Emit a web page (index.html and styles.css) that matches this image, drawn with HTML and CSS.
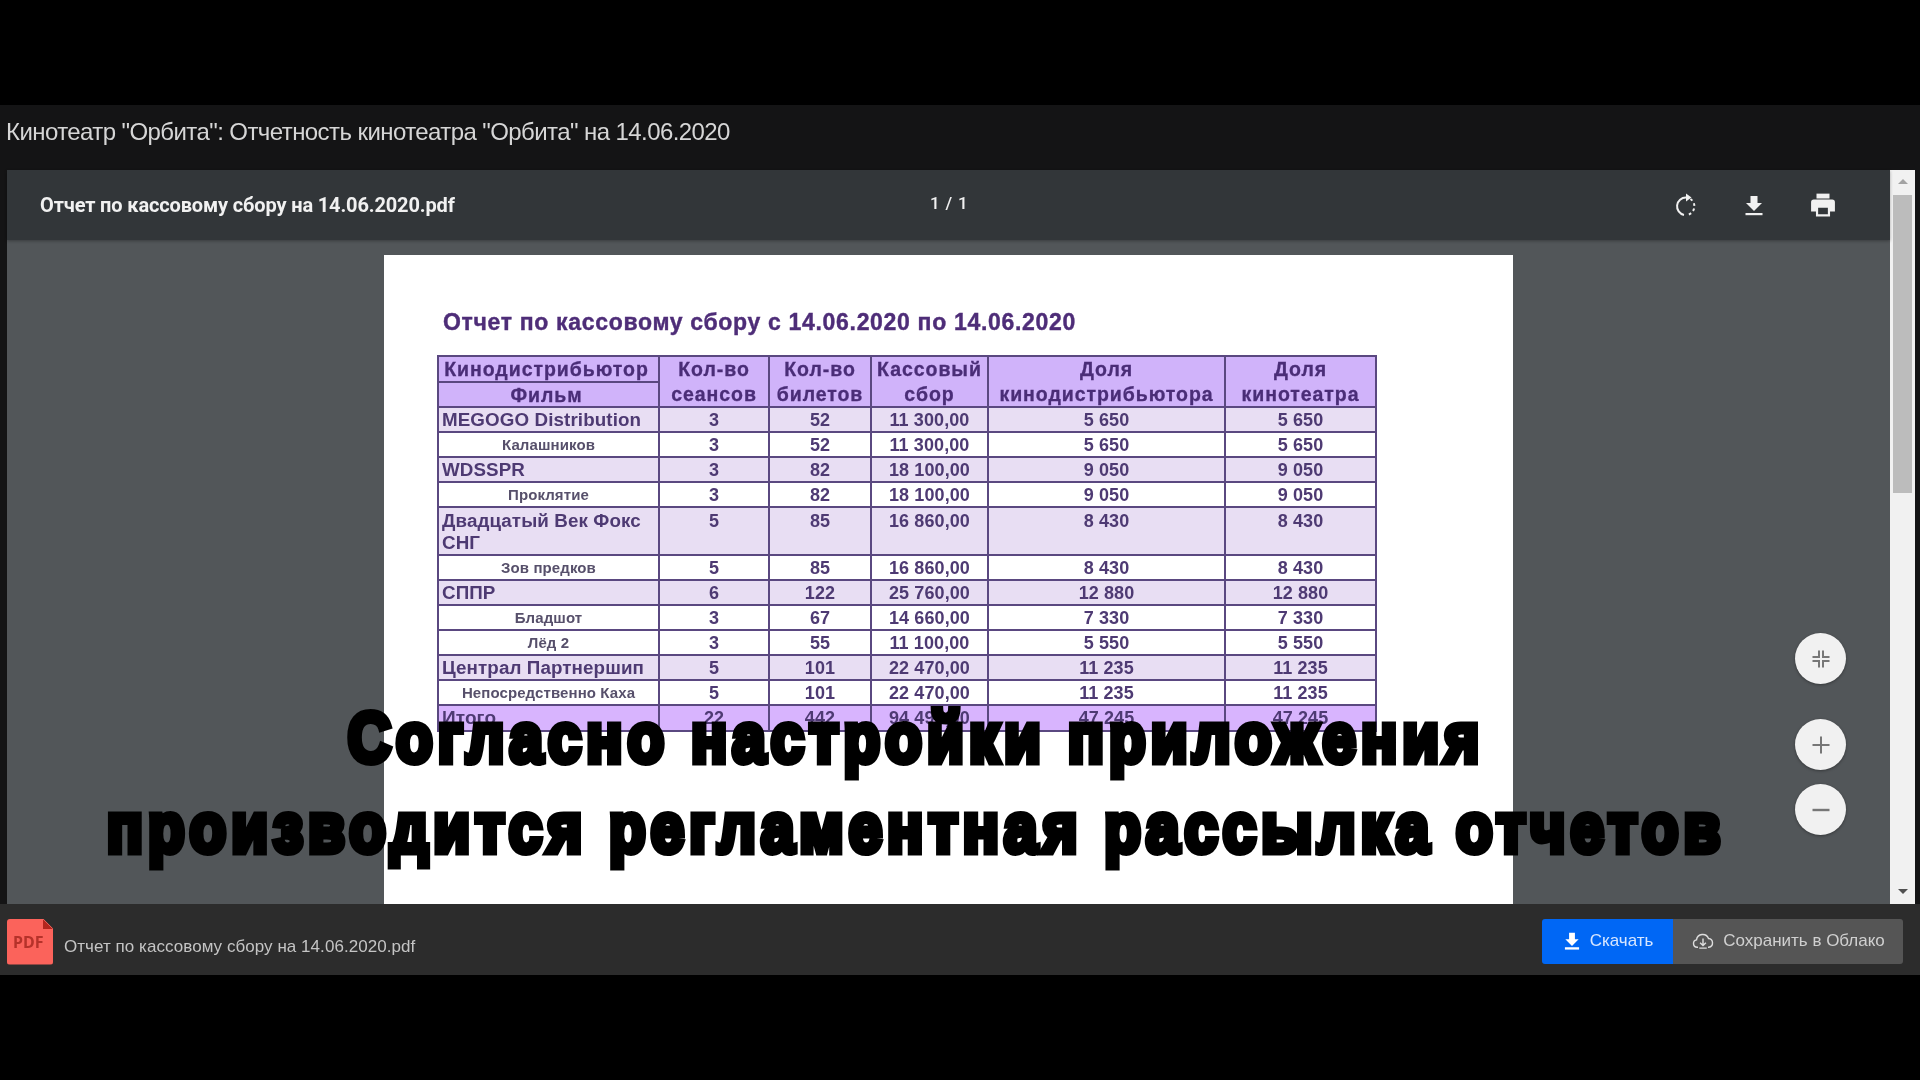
FILE: index.html
```html
<!DOCTYPE html>
<html lang="ru">
<head>
    <meta charset="UTF-8">
    <title>Отчетность кинотеатра "Орбита"</title>
    <link rel="stylesheet" href="styles.css">
</head>
<body>
    <div class="screen">
        <div class="title-bar">Кинотеатр "Орбита": Отчетность кинотеатра "Орбита" на 14.06.2020</div>

        <div class="viewer-row">
            <div class="viewer">
                <div class="toolbar">
                    <div class="doc-name">Отчет по кассовому сбору на 14.06.2020.pdf</div>
                    <div class="page-count">1 / 1</div>
                    <div class="tools">
                        <svg class="tool" viewBox="0 0 24 24"><path d="M12 4.500a8.800 8.800 0 0 0-2 17.400" fill="none" stroke="#f1f1f1" stroke-width="2"/><path d="M12 .5l5.500 4-5.500 4z" fill="#f1f1f1"/><path d="M16.500 6a8.800 8.800 0 0 1-3.500 16" fill="none" stroke="#f1f1f1" stroke-width="2" stroke-dasharray="2.600 2.800"/></svg>
                        <svg class="tool" viewBox="0 0 24 24"><path d="M8.500 3h7v7H20l-8 8-8-8h4.500z" fill="#f1f1f1"/><rect x="3.500" y="20" width="17" height="2.200" fill="#f1f1f1"/></svg>
                        <svg class="tool print" viewBox="0 0 24 24"><path d="M6 1.500h12v4.500H6z" fill="#f1f1f1"/><path fill-rule="evenodd" d="M3.500 7h17A2.500 2.500 0 0 1 23 9.500V18h-4.500v4.500h-13V18H1V9.500A2.500 2.500 0 0 1 3.500 7zM7.500 14.500v6h9v-6z" fill="#f1f1f1"/></svg>
                    </div>
                </div>

                <div class="canvas">
                    <div class="page">
                        <h1 class="report-title">Отчет по кассовому сбору с 14.06.2020 по 14.06.2020</h1>
                        <table class="report">
                            <colgroup>
                                <col class="c-name"><col class="c-sess"><col class="c-tick"><col class="c-sum"><col class="c-dist"><col class="c-cin">
                            </colgroup>
                            <thead>
                                <tr class="h1">
                                    <th class="th-name">Кинодистрибьютор</th>
                                    <th rowspan="2">Кол-во<br>сеансов</th>
                                    <th rowspan="2">Кол-во<br>билетов</th>
                                    <th rowspan="2">Кассовый<br>сбор</th>
                                    <th rowspan="2">Доля<br>кинодистрибьютора</th>
                                    <th rowspan="2">Доля<br>кинотеатра</th>
                                </tr>
                                <tr class="h2"><th class="th-name">Фильм</th></tr>
                            </thead>
                            <tbody>
                                <tr class="dist"><td>MEGOGO Distribution</td><td>3</td><td>52</td><td>11 300,00</td><td>5 650</td><td>5 650</td></tr>
                                <tr class="film"><td>Калашников</td><td>3</td><td>52</td><td>11 300,00</td><td>5 650</td><td>5 650</td></tr>
                                <tr class="dist"><td>WDSSPR</td><td>3</td><td>82</td><td>18 100,00</td><td>9 050</td><td>9 050</td></tr>
                                <tr class="film"><td>Проклятие</td><td>3</td><td>82</td><td>18 100,00</td><td>9 050</td><td>9 050</td></tr>
                                <tr class="dist tall"><td>Двадцатый Век Фокс СНГ</td><td>5</td><td>85</td><td>16 860,00</td><td>8 430</td><td>8 430</td></tr>
                                <tr class="film"><td>Зов предков</td><td>5</td><td>85</td><td>16 860,00</td><td>8 430</td><td>8 430</td></tr>
                                <tr class="dist"><td>СППР</td><td>6</td><td>122</td><td>25 760,00</td><td>12 880</td><td>12 880</td></tr>
                                <tr class="film"><td>Бладшот</td><td>3</td><td>67</td><td>14 660,00</td><td>7 330</td><td>7 330</td></tr>
                                <tr class="film"><td>Лёд 2</td><td>3</td><td>55</td><td>11 100,00</td><td>5 550</td><td>5 550</td></tr>
                                <tr class="dist"><td>Централ Партнершип</td><td>5</td><td>101</td><td>22 470,00</td><td>11 235</td><td>11 235</td></tr>
                                <tr class="film"><td>Непосредственно Каха</td><td>5</td><td>101</td><td>22 470,00</td><td>11 235</td><td>11 235</td></tr>
                                <tr class="total"><td>Итого</td><td>22</td><td>442</td><td>94 490,00</td><td>47 245</td><td>47 245</td></tr>
                            </tbody>
                        </table>
                    </div>

                    <div class="fab fab-fit">
                        <svg viewBox="0 0 24 24"><path d="M10 3.500V10H3.500M14 3.500V10h6.500M10 20.500V14H3.500M14 20.500V14h6.500" fill="none" stroke="#777" stroke-width="2"/></svg>
                    </div>
                    <div class="fab fab-plus">
                        <svg viewBox="0 0 24 24"><path d="M12 3.500v17M3.500 12h17" fill="none" stroke="#777" stroke-width="2"/></svg>
                    </div>
                    <div class="fab fab-minus">
                        <svg viewBox="0 0 24 24"><path d="M3.500 12h17" fill="none" stroke="#777" stroke-width="2.400"/></svg>
                    </div>
                </div>
            </div>

            <div class="scrollbar">
                <div class="arrow-up"></div>
                <div class="thumb"></div>
                <div class="arrow-down"></div>
            </div>
        </div>

        <div class="bottom-bar">
            <div class="file-icon">PDF</div>
            <div class="file-name">Отчет по кассовому сбору на 14.06.2020.pdf</div>
            <div class="actions">
                <button class="btn btn-blue">
                    <svg viewBox="0 0 24 24"><path d="M8.500 2h7v8H20l-8 8-8-8h4.500z" fill="#fff"/><rect x="3.500" y="19.500" width="17" height="2.800" fill="#fff"/></svg>
                    Скачать
                </button>
                <button class="btn btn-grey">
                    <svg viewBox="0 0 26 24"><path d="M7 19.500H6a4.500 4.500 0 0 1-.8-8.900A7.500 7.500 0 0 1 19.600 9a5.300 5.300 0 0 1 .4 10.500h-1" fill="none" stroke="#ddd" stroke-width="1.700"/><path d="M13 9v8M9.500 14l3.500 3.500 3.500-3.500M8.500 20.500h9" fill="none" stroke="#ddd" stroke-width="1.700"/></svg>
                    Сохранить в Облако
                </button>
            </div>
        </div>

        <div class="caption">
            <div class="caption-line">Согласно настройки приложения</div>
            <div class="caption-line">производится регламентная рассылка отчетов</div>
        </div>
    </div>
</body>
</html>
```

FILE: styles.css
```css
html, body { margin: 0; padding: 0; background: #000; }
body { font-family: "Liberation Sans", Arial, sans-serif; overflow: hidden; }

.screen { position: relative; width: 1920px; height: 1080px; padding-top: 105px; box-sizing: border-box; overflow: hidden; display: flex; flex-direction: column; background: #000; filter: blur(0.5px); }

.title-bar { height: 65px; line-height: 54px; padding-left: 6px; background: #141415; color: #d6d6d6; font-size: 24px; letter-spacing: -0.58px; white-space: nowrap; }

.viewer-row { height: 734px; display: flex; padding-left: 7px; padding-right: 5px; background: #141415; }
.viewer { flex: 1; min-width: 0; display: flex; flex-direction: column; background: #525659; }

.toolbar { position: relative; height: 70px; flex: none; display: flex; align-items: center; padding-left: 33px; background: #323639; box-shadow: 0 1px 3px rgba(0,0,0,0.3); z-index: 1; }
.doc-name { color: #f1f1f1; font-family: Roboto, sans-serif; font-weight: 700; font-size: 20px; letter-spacing: -0.14px; }
.page-count { position: absolute; left: 923px; top: 23px; color: #f1f1f1; font-family: Roboto, sans-serif; font-weight: 500; font-size: 17px; letter-spacing: 0.8px; }
.tools { margin-left: auto; margin-right: 54px; display: flex; align-items: center; gap: 44px; }
.tool { width: 24px; height: 24px; display: block; }
.print { width: 26px; height: 26px; }

.canvas { position: relative; flex: 1; overflow: hidden; display: flex; justify-content: center; padding-top: 15px; }
.page { width: 1129px; margin-left: 3px; margin-right: 3px; height: 800px; flex: none; background: #fff; padding: 100px 0 0 53px; box-sizing: border-box; position: relative; }

.report-title { position: absolute; left: 59px; top: 54px; margin: 0; color: #4e2d78; font-size: 23px; font-weight: 700; letter-spacing: 0.68px; -webkit-text-stroke: 0.4px #4e2d78; white-space: nowrap; }

.report { width: 938px; table-layout: fixed; border-collapse: collapse; color: #4e3a73; font-weight: 700; }
.c-name { width: 221px; }
.c-sess { width: 110px; }
.c-tick { width: 102px; }
.c-sum { width: 117px; }
.c-dist { width: 237px; }
.c-cin { width: 151px; }
.report th, .report td { border: 2px solid #5a4880; padding: 0 4px; text-align: center; box-sizing: border-box; overflow: hidden; white-space: nowrap; }
.report th { background: #d0b3fa; color: #4a2d77; font-size: 19.500px; line-height: 24.500px; letter-spacing: 0.95px; -webkit-text-stroke: 0.3px #4a2d77; padding: 0; }
.report .th-name { line-height: 22px; padding-right: 4px; }
.h1 { height: 26px; }
.h2 { height: 25px; }
.report td { font-size: 18px; line-height: 22px; letter-spacing: 0.1px; }
.dist td { background: #e8def3; height: 25px; }
.dist td:first-child { text-align: left; font-size: 18.800px; padding-left: 3px; white-space: normal; }
.tall td { height: 48px; vertical-align: top; padding-top: 2px; }
.film td { background: #fff; height: 25px; }
.film td:first-child { font-size: 15px; color: #57506b; }
.total td { background: #d8b4fe; height: 26px; }
.total td:first-child { text-align: left; font-size: 19px; padding-left: 3px; }

.fab { position: absolute; left: 1788px; width: 51px; height: 51px; border-radius: 50%; background: #f1f1f1; display: flex; align-items: center; justify-content: center; box-shadow: 0 1px 3px rgba(0,0,0,0.35); }
.fab svg { width: 24px; height: 24px; }
.fab-fit { top: 393px; }
.fab-plus { top: 479px; }
.fab-minus { top: 544px; }

.scrollbar { width: 25px; flex: none; position: relative; background: #f1f1f1; display: flex; flex-direction: column; align-items: center; }
.arrow-up { width: 0; height: 0; margin-top: 9px; border-left: 5px solid transparent; border-right: 5px solid transparent; border-bottom: 5px solid #a3a3a3; }
.thumb { width: 19px; height: 298px; margin-top: 11px; background: #bcbcbc; }
.arrow-down { width: 0; height: 0; margin-top: auto; margin-bottom: 10px; border-left: 5px solid transparent; border-right: 5px solid transparent; border-top: 5px solid #505050; }

.bottom-bar { height: 71px; flex: none; display: flex; align-items: center; padding-left: 7px; padding-right: 17px; background: #2c2c2c; }
.file-icon { position: relative; width: 46px; height: 46px; box-sizing: border-box; padding: 14px 0 0 6px; margin-top: 4px; border-radius: 3px; background: #fb635b; clip-path: polygon(0 0, 36px 0, 100% 10px, 100% 100%, 0 100%); color: #b5322a; font-family: "Noto Sans", sans-serif; font-size: 16px; font-weight: 700; line-height: 18px; }
.file-icon::after { content: ""; position: absolute; right: 0; top: 0; width: 10px; height: 10px; background: linear-gradient(45deg, #b3261e 50%, transparent 50%); }
.file-name { margin-left: 11px; color: #c4c4c4; font-size: 17px; letter-spacing: 0.05px; margin-top: 14px; }
.actions { margin-left: auto; margin-top: 3px; display: flex; }
.btn { height: 45px; border: none; display: flex; align-items: center; font-family: "Liberation Sans", sans-serif; font-size: 17px; padding: 0; }
.btn svg { height: 20px; width: 20px; margin-right: 8px; }
.btn-blue { width: 131px; justify-content: center; background: #0067f5; color: #d6e6ff; border-radius: 3px 0 0 3px; }
.btn-grey { width: 230px; justify-content: center; background: #555; color: #d0d0d0; border-radius: 0 3px 3px 0; }
.btn-grey svg { width: 24px; }

.caption { position: absolute; left: -98px; top: 693px; width: 2028px; color: #000; font-family: "Liberation Sans", sans-serif; font-weight: 700; font-size: 70px; line-height: 90px; letter-spacing: 6px; -webkit-text-stroke: 7px #000; text-align: center; white-space: nowrap; }
.caption-line { height: 90px; transform: scaleX(0.855); }
```
